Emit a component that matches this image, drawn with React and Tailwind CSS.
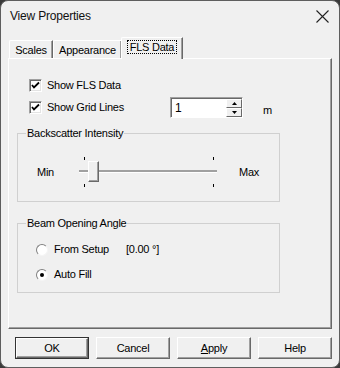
export default function App() {
  return (
    <div className="w-[340px] h-[368px] bg-[#3a3a3a]" style={{ fontFamily: '"Liberation Sans", Arial, sans-serif' }}>
      <div className="h-full rounded-[8px] border border-[#5e5e5e] bg-[#f0f0f0] flex flex-col overflow-hidden text-[11px] tracking-[-0.25px] text-black">
        {/* Title bar */}
        <div className="h-[30px] flex items-center justify-between pl-[9px] pr-[10px]">
          <span className="text-[12px] tracking-[-0.2px] text-[#111]">View Properties</span>
          <svg width="13" height="13" viewBox="0 0 13 13" className="text-[#222]">
            <path d="M0.5 0.5 L12.5 12.5 M12.5 0.5 L0.5 12.5" stroke="currentColor" strokeWidth="1.1" />
          </svg>
        </div>

        <div className="px-[7px] flex flex-col">
          {/* Tabs */}
          <div className="mt-[6px] h-[21px] pl-[1px] flex items-end">
            <Tab label="Scales" width="w-[44px]" />
            <Tab label="Appearance" width="w-[69px]" />
            <div className="relative z-10 w-[62px] h-[22px] -mb-[1px] -ml-[1px] bg-[#f0f0f0] border-t border-l border-white rounded-tl-[2px] border-r border-r-[#696969] shadow-[inset_-1px_0_0_#a0a0a0] flex justify-center pt-[2px]">
              <span className="h-[14px] leading-[12px] px-[2px] border border-dotted border-black">FLS Data</span>
            </div>
          </div>

          {/* Panel */}
          <div className="h-[271px] border-t border-l border-white border-r border-r-[#696969] border-b border-b-[#696969] shadow-[inset_-1px_-1px_0_#a0a0a0] flex flex-col">
            <div className="mt-[20px] pl-[20px] h-[13px] flex items-center">
              <Checkbox />
              <span className="ml-[5px] leading-[13px]">Show FLS Data</span>
            </div>

            <div className="mt-[5px] pl-[20px] h-[21px] flex items-center">
              <div className="w-[141px] flex items-center">
                <Checkbox />
                <span className="ml-[5px] leading-[13px]">Show Grid Lines</span>
              </div>
              <SpinBox value="1" />
              <span className="ml-[20px] mt-[6px]">m</span>
            </div>

            <fieldset className="mt-[8px] ml-[8px] w-[263px] m-0 p-0 pb-[14px] border border-[#d0d0d0] min-w-0">
              <legend className="ml-[8px] px-[1px] leading-[14px]">Backscatter Intensity</legend>
              <div className="mt-[17px] h-[30px] pl-[19px] flex items-center">
                <span className="w-[42px]">Min</span>
                <div className="relative w-[138px] h-[30px]">
                  <div className="absolute left-0 right-0 top-[13px] h-[2px] bg-[#a0a0a0] border-b border-white box-content" />
                  <div className="absolute left-[5px] top-0 w-[1px] h-[3px] bg-black" />
                  <div className="absolute left-[134px] top-0 w-[1px] h-[3px] bg-black" />
                  <div className="absolute left-[5px] top-[27px] w-[1px] h-[3px] bg-black" />
                  <div className="absolute left-[134px] top-[27px] w-[1px] h-[3px] bg-black" />
                  <div className="absolute left-[9px] top-[4px] w-[11px] h-[21px] bg-[#f0f0f0] border-t border-l border-white border-r border-b border-r-[#696969] border-b-[#696969] shadow-[inset_-1px_-1px_0_#a0a0a0]" />
                </div>
                <span className="ml-[22px]">Max</span>
              </div>
            </fieldset>

            <fieldset className="mt-[14px] ml-[8px] w-[263px] m-0 p-0 pb-[11px] border border-[#d0d0d0] min-w-0">
              <legend className="ml-[8px] px-[1px] leading-[14px]">Beam Opening Angle</legend>
              <div className="mt-[13px] h-[13px] pl-[18px] flex items-center">
                <Radio />
                <span className="ml-[6px] w-[72px]">From Setup</span>
                <span>[0.00 °]</span>
              </div>
              <div className="mt-[12px] h-[13px] pl-[18px] flex items-center">
                <Radio checked />
                <span className="ml-[6px]">Auto Fill</span>
              </div>
            </fieldset>
          </div>

          {/* Buttons */}
          <div className="mt-[8px] h-[22px] pl-[7px] flex gap-[7px]">
            <Button isDefault>OK</Button>
            <Button>Cancel</Button>
            <Button>
              <span className="underline underline-offset-[1px]">A</span>pply
            </Button>
            <Button>Help</Button>
          </div>
        </div>
      </div>
    </div>
  )
}

function Tab({ label, width }) {
  return (
    <div className={`${width} h-[18px] bg-[#f0f0f0] border-t border-l border-white rounded-tl-[2px] border-r border-r-[#696969] shadow-[inset_-1px_0_0_#a0a0a0] flex justify-center pt-[3px] leading-[12px]`}>
      {label}
    </div>
  )
}

function Checkbox() {
  return (
    <div className="w-[13px] h-[13px] shrink-0 bg-white border-t border-l border-[#a0a0a0] border-r border-b border-r-white border-b-white shadow-[inset_1px_1px_0_#696969,inset_-1px_-1px_0_#e3e3e3]">
      <svg width="11" height="11" viewBox="0 0 11 11">
        <polyline points="2,5 4,7.5 9,2.5" fill="none" stroke="#000" strokeWidth="1.8" />
      </svg>
    </div>
  )
}

function Radio({ checked }) {
  return (
    <div className="w-[12px] h-[12px] shrink-0 rounded-full bg-white border border-t-[#808080] border-l-[#808080] border-r-[#f4f4f4] border-b-[#f4f4f4] flex items-center justify-center">
      {checked && <div className="w-[4px] h-[4px] rounded-full bg-black" />}
    </div>
  )
}

function SpinBox({ value }) {
  return (
    <div className="w-[73px] h-[21px] flex border-t border-l border-[#a0a0a0] border-r border-b border-r-white border-b-white shadow-[inset_1px_1px_0_#696969]">
      <div className="flex-1 bg-white pl-[3px] pt-[2px] ml-[1px] mt-[1px] text-[12px] leading-[15px]">{value}</div>
      <div className="w-[16px] flex flex-col mt-[1px]">
        <SpinBtn up />
        <SpinBtn />
      </div>
    </div>
  )
}

function SpinBtn({ up }) {
  return (
    <div className="flex-1 bg-[#f0f0f0] border-t border-l border-white border-r border-b border-r-[#696969] border-b-[#696969] flex items-center justify-center">
      <svg width="5" height="3" viewBox="0 0 5 3">
        <path d={up ? "M2.5 0 L5 3 L0 3 Z" : "M0 0 L5 0 L2.5 3 Z"} fill="#000" />
      </svg>
    </div>
  )
}

function Button({ children, isDefault }) {
  return (
    <div className={`w-[74px] h-[22px] ${isDefault ? "border border-[#333]" : ""}`}>
      <div className="h-full bg-[#f0f0f0] border-t border-l border-white border-r border-b border-r-[#696969] border-b-[#696969] shadow-[inset_-1px_-1px_0_#a0a0a0] flex items-center justify-center leading-[13px]">
        {children}
      </div>
    </div>
  )
}
